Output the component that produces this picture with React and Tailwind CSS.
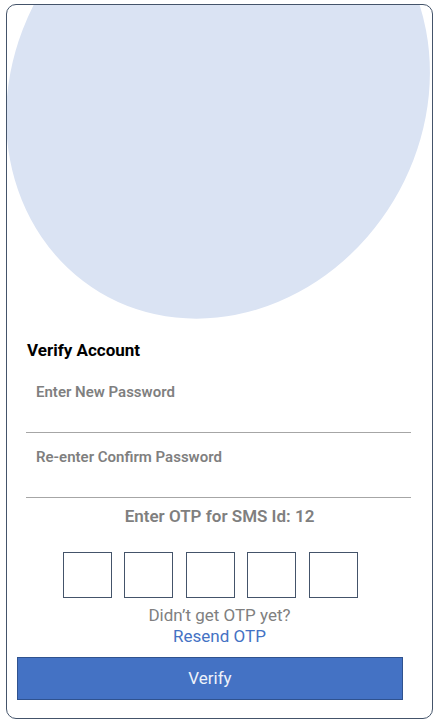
export default function App() {
  return (
    <div className="pl-[6px] pt-[4px] bg-white" style={{ fontFamily: "Roboto, 'Liberation Sans', sans-serif" }}>
      <div className="w-[427px] h-[715px] border border-[#44546a] rounded-[10px] overflow-hidden flex flex-col bg-white">
        <svg width="425" height="315" className="block shrink-0">
          <ellipse cx="211" cy="90" rx="205" ry="230" transform="rotate(31 211 90)" fill="#dae3f3" />
        </svg>
        <div className="pl-[20px] pt-[18px] text-[17px] leading-[24px] font-bold text-black">Verify Account</div>
        <div className="mt-[6px] ml-[19px] w-[385px] border-b border-[#a6a6a6] pt-[14px] pb-[30px] pl-[10px] text-[15px] leading-[20px] font-semibold text-[#7f7f7f]">
          Enter New Password
        </div>
        <div className="ml-[19px] w-[385px] border-b border-[#a6a6a6] pt-[14px] pb-[30px] pl-[10px] text-[15px] leading-[20px] font-semibold text-[#7f7f7f]">
          Re-enter Confirm Password
        </div>
        <div className="mt-[6px] text-center text-[17px] leading-[24px] font-semibold text-[#7f7f7f]">
          Enter OTP for SMS Id: 12
        </div>
        <div className="ml-[10px] w-[386px] mt-[24px] flex justify-center gap-[12.5px]">
          <div className="w-[49px] h-[46px] border border-[#44546a]" />
          <div className="w-[49px] h-[46px] border border-[#44546a]" />
          <div className="w-[49px] h-[46px] border border-[#44546a]" />
          <div className="w-[49px] h-[46px] border border-[#44546a]" />
          <div className="w-[49px] h-[46px] border border-[#44546a]" />
        </div>
        <div className="mt-[7px] text-center text-[17px] leading-[21px] text-[#808080]">Didn’t get OTP yet?</div>
        <div className="text-center text-[17px] leading-[21px] text-[#4472c4]">Resend OTP</div>
        <div className="ml-[10px] w-[386px] mt-[10px] h-[43px] bg-[#4472c4] border border-[#2f528f] flex items-center justify-center text-[17px] text-[#eef2fa]">
          Verify
        </div>
      </div>
    </div>
  );
}
